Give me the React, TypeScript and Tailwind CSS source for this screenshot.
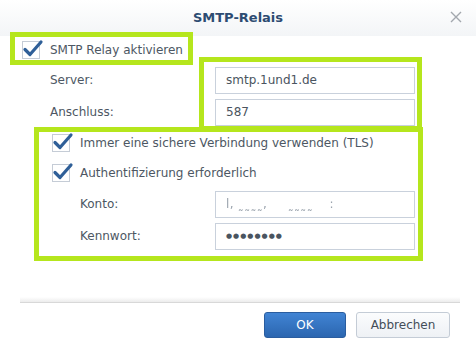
import React from 'react';

const font = { fontFamily: '"DejaVu Sans", Verdana, sans-serif' };

function CheckBox() {
  return (
    <div className="relative w-[18px] h-[18px] border border-[#c5ccd6] bg-white shrink-0">
      <svg className="absolute -left-[1px] -top-[3px]" width="22" height="20" viewBox="0 0 22 20">
        <path d="M3 10.5 L8 15.5 L19 3" fill="none" stroke="#2f5f98" strokeWidth="3.2" strokeLinecap="round" strokeLinejoin="round" />
      </svg>
    </div>
  );
}

function Field({ label, children, indent }: { label: string; children: React.ReactNode; indent: string }) {
  return (
    <div className="h-[32px] flex items-center">
      <div className={`${indent} w-[215px] text-[#4d5763]`}>{label}</div>
      <div className="w-[200px] h-[27px] border border-[#c9d1dc] bg-white flex items-center px-[10px] text-[#4a5460]">
        {children}
      </div>
    </div>
  );
}

export default function App() {
  return (
    <div className="relative w-[476px] h-[346px] bg-white text-[12px] overflow-hidden" style={font}>
      {/* Header */}
      <div className="h-[36px] bg-gradient-to-b from-[#ffffff] to-[#f3f5f7] flex items-center justify-center relative">
        <span className="font-bold text-[13px] text-[#2d4c72]">SMTP-Relais</span>
        <svg className="absolute right-[14px] top-[11px]" width="12" height="12" viewBox="0 0 12 12">
          <path d="M1 1 L11 11 M11 1 L1 11" stroke="#a3a8ae" strokeWidth="1.4" />
        </svg>
      </div>

      {/* Body */}
      <div className="flex flex-col">
        <div className="h-[28px] flex items-center pl-[22px] gap-[10px] text-[#4d5763]">
          <CheckBox />
          <span>SMTP Relay aktivieren</span>
        </div>
        <Field label="Server:" indent="pl-[50px]">smtp.1und1.de</Field>
        <Field label="Anschluss:" indent="pl-[50px]">587</Field>
        <div className="h-[30px] flex items-center pl-[52px] gap-[10px] text-[#4d5763]">
          <CheckBox />
          <span>Immer eine sichere Verbindung verwenden (TLS)</span>
        </div>
        <div className="h-[30px] flex items-center pl-[52px] gap-[10px] text-[#4d5763]">
          <CheckBox />
          <span>Authentifizierung erforderlich</span>
        </div>
        <Field label="Konto:" indent="pl-[80px]">
          <span className="text-[#9aa3ad] blur-[0.6px] tracking-wide">l, ˷˷˷˷,&nbsp;&nbsp;&nbsp;&nbsp;&nbsp;˷˷˷˷&nbsp;&nbsp;&nbsp;&nbsp;:</span>
        </Field>
        <Field label="Kennwort:" indent="pl-[80px]">
          <span className="text-[#4a5460] text-[7px] tracking-[1px]">●●●●●●●●</span>
        </Field>
      </div>

      {/* Footer */}
      <div className="absolute left-[20px] right-[16px] top-[297px] h-[6px] bg-gradient-to-b from-transparent to-[#ececec] border-b border-[#d8d8d8]" />
      <div className="absolute right-[26px] top-[312px] flex gap-[10px]">
        <button className="w-[82px] h-[26px] rounded-[3px] border border-[#2a5d9f] bg-gradient-to-b from-[#4184d4] to-[#2b66b0] text-white">
          OK
        </button>
        <button className="w-[94px] h-[26px] rounded-[3px] border border-[#c4ccd6] bg-gradient-to-b from-[#fbfcfd] to-[#eef1f5] text-[#434d58]">
          Abbrechen
        </button>
      </div>

      {/* Annotation frames */}
      <div className="absolute left-[10px] top-[32px] w-[183px] h-[33px] border-[5px] border-[#b5e61d]" />
      <div className="absolute left-[199px] top-[57px] w-[223px] h-[74px] border-[5px] border-[#b5e61d]" />
      <div className="absolute left-[34px] top-[127px] w-[389px] h-[134px] border-[5px] border-[#b5e61d]" />
    </div>
  );
}
